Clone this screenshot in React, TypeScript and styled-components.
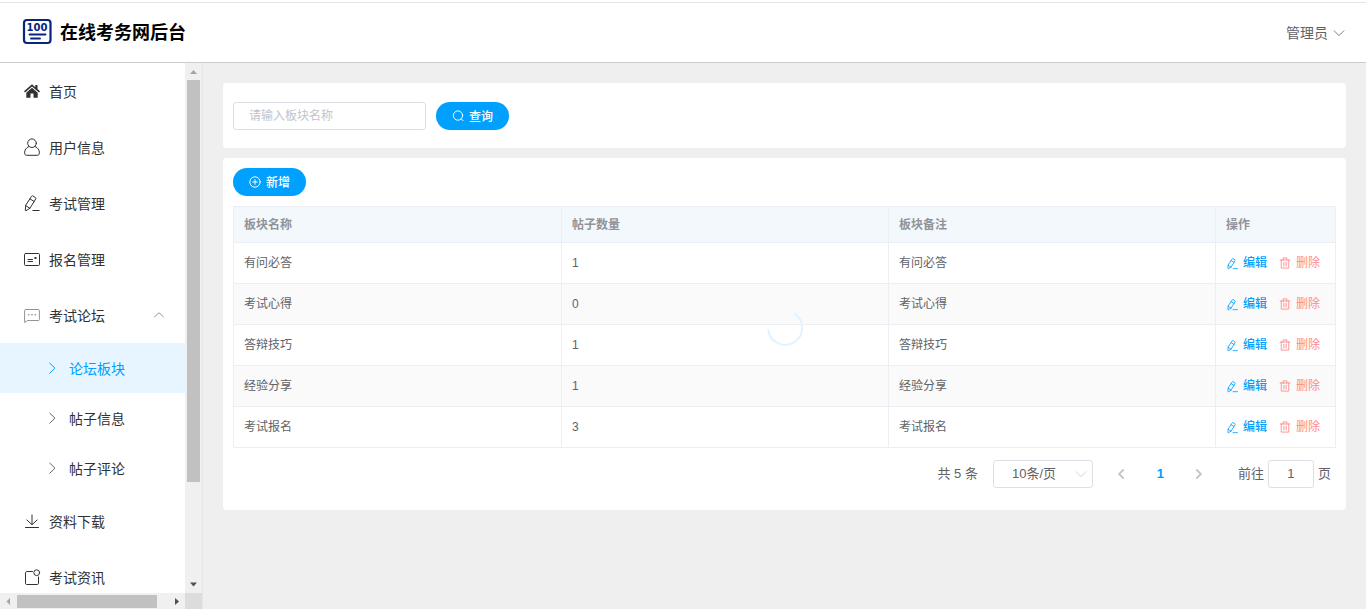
import React from "react";
import styled, { createGlobalStyle, css } from "styled-components";

const GlobalStyle = createGlobalStyle`
  * { box-sizing: border-box; }
  body {
    margin: 0;
    background: #efefef;
    color: #606266;
    font-family: "Liberation Sans", "Noto Sans CJK SC", sans-serif;
    font-size: 14px;
  }
  button, input, select { font-family: inherit; margin: 0; }
`;

/* ---------- icons ---------- */

type IconName =
  | "home" | "user" | "edit" | "postcard" | "chat" | "download" | "news"
  | "up" | "down" | "right" | "prev" | "next" | "search" | "plus" | "trash";

const Svg = styled.svg<{ $size: number }>`
  display: block;
  flex: none;
  width: ${(p) => p.$size}px;
  height: ${(p) => p.$size}px;
  fill: none;
  stroke: currentColor;
  stroke-linecap: round;
  stroke-linejoin: round;
`;

const shapes: Record<IconName, React.ReactNode> = {
  home: (
    <g fill="currentColor" stroke="none">
      <path d="M8 1.300 0 8.300l1 1.200L8 3.400l7 6.100 1-1.200-2.500-2.200V2h-2.200v2.200z" />
      <path d="M8 4.700 2.300 9.700v5h4.200v-4.200h3v4.200h4.200v-5z" />
    </g>
  ),
  user: (
    <>
      <circle cx="8" cy="4.200" r="4.300" />
      <path d="M4.700 7.600C2 8.800.6 11 .6 13.900c0 1.500.8 2.400 2.200 2.400h10.400c1.400 0 2.200-.9 2.200-2.400 0-2.900-1.400-5.100-4.100-6.300" />
    </>
  ),
  edit: (
    <>
      <path d="M7.600 1.200c.3-.5.7-.6 1.200-.3l2.700 1.700c.5.300.6.700.3 1.200L5.900 13.300 2 15.700c-.4.200-.7 0-.7-.4l.4-4.700z" />
      <path d="M6 3.900 10.200 6.500M1.700 10.600 5.900 13.300M8.800 15.500h6.400" />
    </>
  ),
  postcard: (
    <>
      <rect x=".5" y="2.500" width="15" height="12" rx="1" />
      <path d="M4 8.500h4.500M4 10.500h4.500" />
      <rect x="10.500" y="6" width="2" height="2" fill="currentColor" stroke="none" />
    </>
  ),
  chat: (
    <>
      <path d="M1.600 2.500h12.800c.6 0 1 .4 1 1v9c0 .6-.4 1-1 1H3.600L.6 15.500v-12c0-.6.4-1 1-1z" />
      <path d="M4.500 7.700h.2M7.900 7.700h.2M11.300 7.700h.2" strokeWidth="1.600" />
    </>
  ),
  download: <path d="M8 2v9.500M2.900 7 8 11.700 13.100 7M1.500 14.500h13" />,
  news: (
    <>
      <path d="M8.500 2.500H3c-1 0-1.500.5-1.500 1.500v10c0 1 .5 1.500 1.500 1.500h10c1 0 1.500-.5 1.500-1.500V8" />
      <circle cx="12.700" cy="3.700" r="2.900" />
    </>
  ),
  up: <path d="M2 10.500 8 5l6 5.500" />,
  down: <path d="M1.500 5 8 11.500 14.500 5" />,
  right: <path d="M5 1.500 12 8.200 5 15" />,
  prev: <path d="M11 2.500 5.500 8l5.500 5.500" strokeWidth="2.500" />,
  next: <path d="M5 2.500 10.500 8 5 13.500" strokeWidth="2.500" />,
  search: (
    <>
      <circle cx="8" cy="7.400" r="6.200" />
      <path d="m12.500 12 2.300 2.300" />
    </>
  ),
  plus: (
    <>
      <circle cx="8" cy="8" r="6.900" />
      <path d="M8 5v6M5 8h6" />
    </>
  ),
  trash: (
    <path d="M1.500 4h13M5.500 4V1.200h5V4M3 4v10.800h10V4M6.500 7v5M9.500 7v5" />
  ),
};

const Icon = ({ name, size = 16, weight = 1 }: { name: IconName; size?: number; weight?: number }) => (
  <Svg viewBox="0 0 16 16" $size={size} strokeWidth={weight} overflow="visible" aria-hidden="true">
    {shapes[name]}
  </Svg>
);

const LogoDigits = styled.text`
  fill: #06267f;
  font-family: "DejaVu Sans", sans-serif;
  font-size: 10px;
  font-weight: 700;
  text-anchor: middle;
`;

const Logo = () => (
  <svg width="30" height="30" viewBox="0 0 30 30" fill="none" stroke="#06267f" aria-hidden="true">
    <rect x="2" y="2" width="26.500" height="23" rx="3" strokeWidth="2.200" />
    <LogoDigits x="15" y="13" stroke="none">100</LogoDigits>
    <path d="M7.500 16.500h16M9 20.500h9" strokeWidth="1.900" strokeLinecap="round" />
  </svg>
);

/* ---------- page frame ---------- */

const Page = styled.div`
  display: flex;
  flex-direction: column;
  height: 100vh;
  padding-top: 2px;
  background: linear-gradient(#fff, #fff) top / 100% 2px no-repeat;
`;

const Header = styled.header`
  display: flex;
  flex: none;
  align-items: center;
  justify-content: space-between;
  height: 61px;
  padding: 0 21px 0 22px;
  background: #fff;
  border-top: 1px solid #e4e4e4;
  border-bottom: 1px solid #ccc;
`;

const Brand = styled.h1`
  display: flex;
  align-items: center;
  gap: 8px;
  margin: 0;
  color: #000;
  font-size: 18px;
  font-weight: 700;
  line-height: 28px;
`;

const AccountButton = styled.button`
  display: flex;
  align-items: center;
  gap: 5px;
  padding: 0;
  border: 0;
  background: none;
  color: #606266;
  font-size: 14px;
  line-height: 20px;
  > svg { color: #6b8296; }
`;

const Body = styled.div`
  display: flex;
  flex: 1;
  min-height: 0;
`;

/* ---------- sidebar ---------- */

const Sidebar = styled.aside`
  display: grid;
  flex: none;
  grid-template-columns: 1fr 17px;
  grid-template-rows: minmax(0, 1fr) 16px;
  width: 203px;
  background: #fff;
  border-right: 1px solid #e6e6e6;
`;

const Menu = styled.nav`
  overflow: hidden;
`;

const menuLine = css`
  display: flex;
  align-items: center;
  color: #303133;
  font-size: 14px;
  text-decoration: none;
`;

const MenuItem = styled.a<{ $muted?: boolean }>`
  ${menuLine}
  gap: 9px;
  height: 56px;
  padding: 0 20px 0 24px;
  > svg { color: ${(p) => (p.$muted ? "#909399" : "#303133")}; }
  > svg:last-child { margin-left: auto; color: #909399; }
`;

const SubItem = styled.a<{ $active?: boolean }>`
  ${menuLine}
  gap: 11px;
  height: 50px;
  padding-left: 46px;
  > svg { color: #606266; }
  ${(p) => p.$active && css`
    color: #00a0ff;
    background: #e6f5ff;
    > svg { color: #00a0ff; }
  `}
`;

const Track = styled.div<{ $row?: boolean }>`
  display: flex;
  flex-direction: ${(p) => (p.$row ? "row" : "column")};
  min-height: 0;
  background: #f0f0f0;
`;

const ArrowEnd = styled.span`
  display: flex;
  flex: none;
  align-items: center;
  justify-content: center;
  width: 17px;
  height: 17px;
`;

const Rail = styled.div<{ $row?: boolean }>`
  flex: 1;
  min-height: 0;
  padding: ${(p) => (p.$row ? "2px 0 1px" : "0 2px")};
`;

const Thumb = styled.div<{ $row?: boolean }>`
  width: ${(p) => (p.$row ? "93%" : "100%")};
  height: ${(p) => (p.$row ? "100%" : "81%")};
  background: #c1c1c1;
`;

const Corner = styled.div`
  background: #dcdcdc;
`;

const Arrow = ({ d, color }: { d: string; color: string }) => (
  <ArrowEnd>
    <svg width="9" height="9" viewBox="0 0 9 9" fill={color} aria-hidden="true"><path d={d} /></svg>
  </ArrowEnd>
);

/* ---------- content ---------- */

const Main = styled.main`
  display: flex;
  flex: 1;
  flex-direction: column;
  gap: 10px;
  min-width: 0;
  padding: 20px;
  background: #efefef;
`;

const Card = styled.section`
  padding: 10px;
  background: #fff;
  border-radius: 4px;
`;

const SearchCard = styled(Card)`
  padding: 19px 10px 18px;
`;

const SearchForm = styled.form`
  display: flex;
  gap: 10px;
`;

const SearchInput = styled.input`
  width: 193px;
  height: 28px;
  padding: 0 15px;
  border: 1px solid #dcdfe6;
  border-radius: 3px;
  color: #606266;
  font-size: 12px;
  &::placeholder { color: #c0c4cc; opacity: 1; }
`;

const PillButton = styled.button`
  display: flex;
  align-items: center;
  justify-content: center;
  gap: 5px;
  width: 73px;
  height: 28px;
  padding: 0 0 1px;
  border: 0;
  border-radius: 14px;
  background: #00a0ff;
  color: #fff;
  font-size: 12px;
  font-weight: 500;
`;

const TableArea = styled.div`
  position: relative;
  margin-top: 10px;
  border-top: 1px solid #ebeef5;
  border-left: 1px solid #ebeef5;
`;

const Table = styled.table`
  width: 100%;
  border-spacing: 0;
  table-layout: fixed;
  font-size: 12px;
  line-height: 20px;
`;

const cell = css`
  padding: 0 10px;
  border-right: 1px solid #ebeef5;
  border-bottom: 1px solid #ebeef5;
  text-align: left;
`;

const HeadCell = styled.th<{ $width?: number }>`
  ${cell}
  ${(p) => p.$width && `width: ${p.$width}px;`}
  height: 36px;
  background: #f3f8fc;
  color: #909399;
  font-weight: 700;
`;

const Cell = styled.td`
  ${cell}
  height: 41px;
`;

const Row = styled.tr`
  &:nth-child(even) { background: #fafafa; }
`;

const Actions = styled.div`
  display: flex;
  gap: 12px;
  padding-left: 1px;
`;

const ActionButton = styled.button<{ $danger?: boolean }>`
  display: flex;
  align-items: center;
  gap: 5px;
  padding: 0;
  border: 0;
  background: none;
  color: ${(p) => (p.$danger ? "#ff8a8a" : "#00a0ff")};
  font-size: 12px;
  font-weight: ${(p) => (p.$danger ? 400 : 500)};
  line-height: 20px;
`;

const Spinner = styled.svg`
  position: absolute;
  top: 50%;
  left: 50%;
  width: 42px;
  height: 42px;
  margin: -22px -21px;
  fill: none;
  stroke: #e0f3ff;
  stroke-width: 2;
  stroke-linecap: round;
`;

const Pagination = styled.div`
  display: flex;
  align-items: center;
  justify-content: flex-end;
  height: 28px;
  margin: 12px 5px;
  color: #606266;
  font-size: 13px;
  line-height: 28px;
`;

const SizePicker = styled.span`
  position: relative;
  margin: 0 9px 0 15px;
  > svg {
    position: absolute;
    top: 8px;
    right: 6px;
    color: #c0c4cc;
    pointer-events: none;
  }
`;

const SizeSelect = styled.select`
  display: block;
  appearance: none;
  width: 100px;
  height: 28px;
  padding: 0 25px 1px 18px;
  border: 1px solid #dcdfe6;
  border-radius: 3px;
  background: #fff;
  color: #606266;
  font-size: 13px;
`;

const PageButton = styled.button<{ $active?: boolean }>`
  display: flex;
  align-items: center;
  justify-content: center;
  width: 39px;
  height: 28px;
  padding: 0 0 1px;
  border: 0;
  background: none;
  color: ${(p) => (p.$active ? "#00a0ff" : "#c0c4cc")};
  font-size: 13px;
  font-weight: 700;
`;

const Jumper = styled.label`
  display: flex;
  gap: 4px;
  margin-left: 19px;
`;

const JumpInput = styled.input`
  width: 46px;
  height: 28px;
  padding: 0 0 1px;
  border: 1px solid #dcdfe6;
  border-radius: 3px;
  color: #606266;
  font-size: 13px;
  text-align: center;
`;

/* ---------- data ---------- */

const topMenu: { icon: IconName; label: string }[] = [
  { icon: "home", label: "首页" },
  { icon: "user", label: "用户信息" },
  { icon: "edit", label: "考试管理" },
  { icon: "postcard", label: "报名管理" },
];
const forumMenu = ["论坛板块", "帖子信息", "帖子评论"];
const bottomMenu: { icon: IconName; label: string }[] = [
  { icon: "download", label: "资料下载" },
  { icon: "news", label: "考试资讯" },
];
const boards = [
  { name: "有问必答", posts: 1 },
  { name: "考试心得", posts: 0 },
  { name: "答辩技巧", posts: 1 },
  { name: "经验分享", posts: 1 },
  { name: "考试报名", posts: 3 },
];

export default function App() {
  return (
    <>
      <GlobalStyle />
      <Page>
        <Header>
          <Brand><Logo />在线考务网后台</Brand>
          <AccountButton type="button">管理员<Icon name="down" size={12} weight={1.3} /></AccountButton>
        </Header>
        <Body>
          <Sidebar>
            <Menu>
              {topMenu.map((m) => (
                <MenuItem href="#" key={m.label}><Icon name={m.icon} /><span>{m.label}</span></MenuItem>
              ))}
              <MenuItem href="#" $muted>
                <Icon name="chat" /><span>考试论坛</span><Icon name="up" size={12} weight={1.3} />
              </MenuItem>
              {forumMenu.map((label, i) => (
                <SubItem href="#" key={label} $active={i === 0}><Icon name="right" size={12} weight={1.3} />{label}</SubItem>
              ))}
              {bottomMenu.map((m) => (
                <MenuItem href="#" key={m.label}><Icon name={m.icon} /><span>{m.label}</span></MenuItem>
              ))}
            </Menu>
            <Track>
              <Arrow d="M1 7 4.500 3 8 7z" color="#a3a3a3" />
              <Rail><Thumb /></Rail>
              <Arrow d="M1 2.500h7L4.500 6.500z" color="#505050" />
            </Track>
            <Track $row>
              <Arrow d="M6 1v7L2.500 4.500z" color="#a3a3a3" />
              <Rail $row><Thumb $row /></Rail>
              <Arrow d="M3 1v7l4-3.500z" color="#505050" />
            </Track>
            <Corner />
          </Sidebar>
          <Main>
            <SearchCard>
              <SearchForm onSubmit={(e) => e.preventDefault()}>
                <SearchInput aria-label="板块名称" placeholder="请输入板块名称" />
                <PillButton type="submit"><Icon name="search" size={12} weight={1.3} />查询</PillButton>
              </SearchForm>
            </SearchCard>
            <Card>
              <PillButton type="button"><Icon name="plus" size={12} weight={1.3} />新增</PillButton>
              <TableArea>
                <Table>
                  <thead>
                    <tr>
                      <HeadCell $width={328}>板块名称</HeadCell>
                      <HeadCell>帖子数量</HeadCell>
                      <HeadCell>板块备注</HeadCell>
                      <HeadCell $width={120}>操作</HeadCell>
                    </tr>
                  </thead>
                  <tbody>
                    {boards.map((b) => (
                      <Row key={b.name}>
                        <Cell>{b.name}</Cell>
                        <Cell>{b.posts}</Cell>
                        <Cell>{b.name}</Cell>
                        <Cell>
                          <Actions>
                            <ActionButton type="button"><Icon name="edit" size={11} weight={1.200} />编辑</ActionButton>
                            <ActionButton type="button" $danger><Icon name="trash" size={12} weight={1.200} />删除</ActionButton>
                          </Actions>
                        </Cell>
                      </Row>
                    ))}
                  </tbody>
                </Table>
                <Spinner viewBox="0 0 42 42" aria-hidden="true">
                  <path d="M4.300 24A17 17 0 1 0 31 8" />
                </Spinner>
              </TableArea>
              <Pagination>
                <span>共 5 条</span>
                <SizePicker>
                  <SizeSelect aria-label="每页条数" defaultValue="10">
                    <option value="10">10条/页</option>
                    <option value="20">20条/页</option>
                  </SizeSelect>
                  <Icon name="down" size={12} />
                </SizePicker>
                <PageButton type="button" aria-label="上一页"><Icon name="prev" size={12} /></PageButton>
                <PageButton type="button" $active>1</PageButton>
                <PageButton type="button" aria-label="下一页"><Icon name="next" size={12} /></PageButton>
                <Jumper>前往<JumpInput defaultValue="1" />页</Jumper>
              </Pagination>
            </Card>
          </Main>
        </Body>
      </Page>
    </>
  );
}
